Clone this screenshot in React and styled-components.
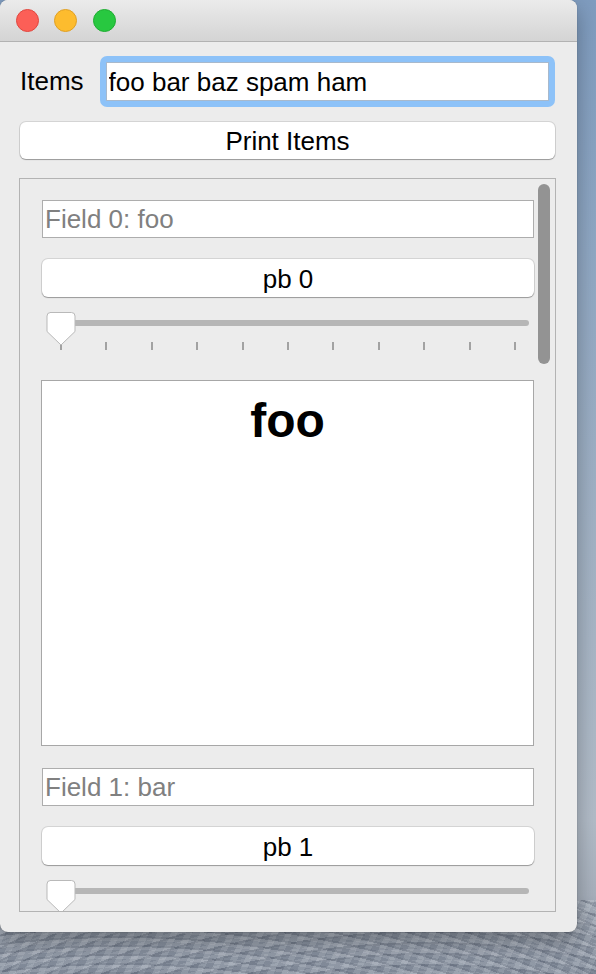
import React from "react";
import styled, { createGlobalStyle } from "styled-components";

const GlobalStyle = createGlobalStyle`
  html, body {
    margin: 0;
    padding: 0;
  }
  body {
    font-family: "Liberation Sans", Arial, sans-serif;
    background: #ffffff;
  }
  * {
    box-sizing: border-box;
  }
`;

// desktop wallpaper behind the window (blue sky, snowy rocks at the bottom)
const Desktop = styled.div`
  width: 596px;
  height: 974px;
  overflow: hidden;
  background:
    repeating-radial-gradient(
      circle at 120px 1040px,
      rgba(235, 238, 244, 0.14) 0 3px,
      rgba(40, 48, 66, 0.12) 3px 5px,
      transparent 5px 9px
    ) 0 900px / 100% 74px no-repeat,
    repeating-radial-gradient(
      circle at 430px 880px,
      rgba(40, 48, 66, 0.12) 0 2px,
      rgba(230, 234, 240, 0.14) 2px 6px,
      transparent 6px 11px
    ) 0 900px / 100% 74px no-repeat,
    repeating-linear-gradient(
      115deg,
      rgba(255, 255, 255, 0.08) 0 6px,
      rgba(50, 58, 78, 0.08) 6px 13px
    ) 0 900px / 100% 74px no-repeat,
    linear-gradient(
      180deg,
      #7f9cbf 0px,
      #90a8c4 250px,
      #a3b3c5 550px,
      #b2bcc8 820px,
      #a7b0bc 895px,
      #8f98a5 935px,
      #858e9c 974px
    );
`;

const Window = styled.div`
  width: 577px;
  height: 932px;
  background: #ececec;
  border-radius: 8px;
  overflow: hidden;
  box-shadow: 0 0 1px rgba(0, 0, 0, 0.45), 0 8px 22px rgba(0, 0, 0, 0.3);
`;

const TitleBar = styled.div`
  height: 42px;
  display: flex;
  align-items: center;
  gap: 15.6px;
  padding: 0 0 1px 15.5px;
  background: linear-gradient(180deg, #ebebeb, #d4d4d4);
  border-bottom: 1px solid #b2b2b2;
`;

const Light = styled.span`
  width: 23px;
  height: 23px;
  border-radius: 50%;
  background: ${(p) => p.$fill};
  border: 1px solid ${(p) => p.$edge};
`;

const Content = styled.div`
  padding: 14px 22px 0 20px;
`;

const ItemsRow = styled.div`
  display: flex;
  align-items: center;
  gap: 16px;
`;

const Label = styled.span`
  font-size: 26px;
  color: #000;
`;

const FocusRing = styled.div`
  flex: 1;
  padding: 6px;
  border-radius: 7px;
  background: #8dc2f8;
`;

const MainInput = styled.input`
  display: block;
  width: 100%;
  height: 39px;
  margin: 0;
  padding: 1px 2px 0;
  border: 1px solid #a8b9cc;
  background: #fff;
  font-family: inherit;
  font-size: 26px;
  color: #000;
  outline: none;
`;

const PushButton = styled.button`
  display: block;
  width: 100%;
  height: ${(p) => p.$h || 38}px;
  margin: ${(p) => p.$m || "0"};
  padding: 2px 0 0;
  border: none;
  border-radius: 6px;
  background: #fff;
  box-shadow: 0 0 0 1px rgba(0, 0, 0, 0.1), 0 1px 1px rgba(0, 0, 0, 0.28);
  font-family: inherit;
  font-size: 26px;
  color: #000;
`;

const ScrollFrame = styled.div`
  position: relative;
  height: 734px;
  margin: 19px -1px 0 -1px;
  padding: 21px 21px 0 22px;
  border: 1px solid #b3b3b3;
  overflow: hidden;
`;

const ScrollThumb = styled.div`
  position: absolute;
  top: 5px;
  right: 5px;
  width: 12px;
  height: 180px;
  border-radius: 6px;
  background: #939393;
`;

const FieldInput = styled.input`
  display: block;
  width: 100%;
  height: 38px;
  margin: 0 0 21px;
  padding: 1px 2px 0;
  border: 1px solid #adadad;
  background: #fff;
  font-family: inherit;
  font-size: 26px;
  color: #000;
  outline: none;

  &::placeholder {
    color: #808080;
  }
`;

const Slider = styled.div`
  position: relative;
  height: 38px;
  margin: 15px 0 30px;
  padding-top: 8px;
`;

const Track = styled.div`
  height: 6px;
  margin: 0 5px 0 8px;
  border-radius: 3px;
  background: #b6b6b6;
`;

const Ticks = styled.div`
  display: flex;
  justify-content: space-between;
  margin: 16px 18px 0 18px;
`;

const Tick = styled.span`
  width: 2px;
  height: 8px;
  background: #a2a2a2;
`;

const Knob = styled.svg`
  position: absolute;
  top: 0;
  left: 4px;
`;

const TitleBox = styled.div`
  height: 366px;
  margin: 0 0 22px -1px;
  padding-top: 12px;
  border: 1px solid #a7a7a7;
  background: #fff;
  text-align: center;
  font-size: 48px;
  font-weight: bold;
  color: #000;
`;

function SliderKnob() {
  return (
    <Knob width="30" height="34" viewBox="0 0 30 34">
      <path
        d="M4 0.5 H25.5 Q29 0.5 29 4 V19.5 L15 33 L1 19.5 V4 Q1 0.5 4.5 0.5 Z"
        fill="#fff"
        stroke="#b9b9b9"
        strokeWidth="1"
      />
    </Knob>
  );
}

function TickSlider({ ticks = true }) {
  return (
    <Slider>
      <Track />
      {ticks && (
        <Ticks>
          {Array.from({ length: 11 }).map((_, i) => (
            <Tick key={i} />
          ))}
        </Ticks>
      )}
      <SliderKnob />
    </Slider>
  );
}

function ItemWidgets({ index, word, last }) {
  return (
    <>
      <FieldInput placeholder={`Field ${index}: ${word}`} readOnly />
      <PushButton>{`pb ${index}`}</PushButton>
      <TickSlider ticks={!last} />
      {!last && <TitleBox>{word}</TitleBox>}
    </>
  );
}

export default function App() {
  return (
    <>
      <GlobalStyle />
      <Desktop>
        <Window>
          <TitleBar>
            <Light $fill="#fc5f57" $edge="#e1473f" />
            <Light $fill="#fdbc2e" $edge="#e0a024" />
            <Light $fill="#28c840" $edge="#1ead31" />
          </TitleBar>
          <Content>
            <ItemsRow>
              <Label>Items</Label>
              <FocusRing>
                <MainInput defaultValue="foo bar baz spam ham" />
              </FocusRing>
            </ItemsRow>
            <PushButton $h={37} $m="15px 0 0">
              Print Items
            </PushButton>
            <ScrollFrame>
              <ItemWidgets index={0} word="foo" />
              <ItemWidgets index={1} word="bar" last />
              <ScrollThumb />
            </ScrollFrame>
          </Content>
        </Window>
      </Desktop>
    </>
  );
}
